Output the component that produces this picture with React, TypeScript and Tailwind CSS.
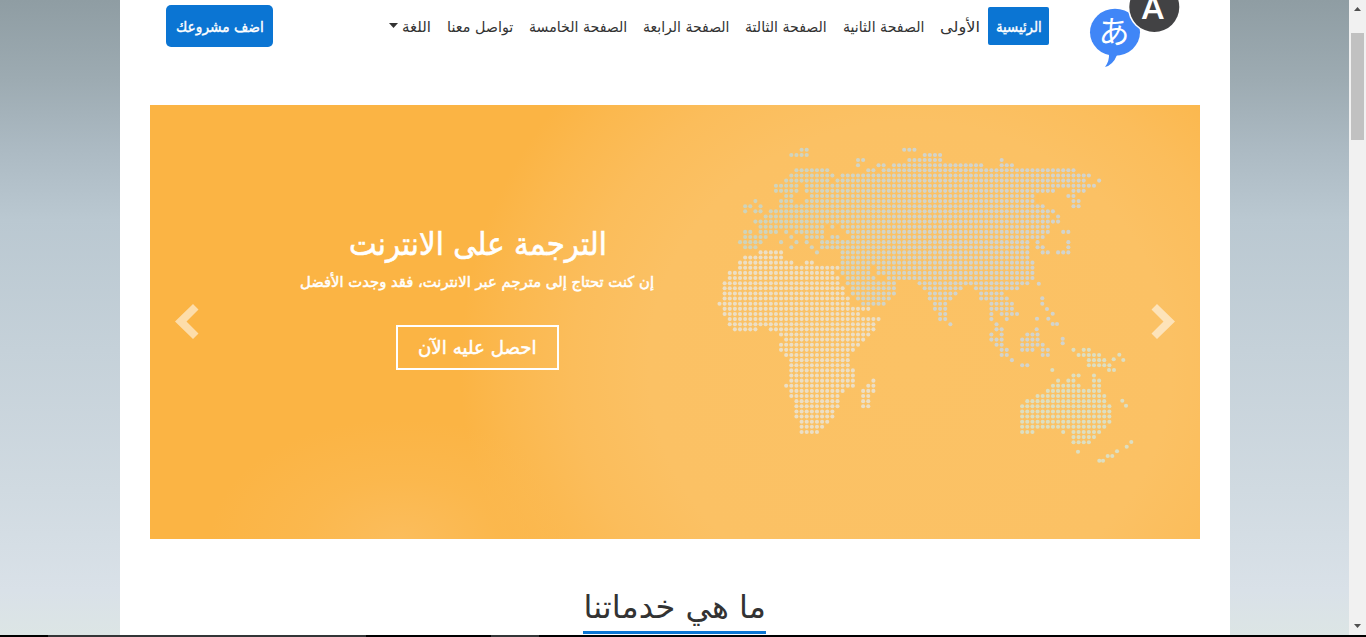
import { useLayoutEffect, useRef, useState, type ReactNode } from 'react';
import clsx from 'clsx';

/** A line of text that is narrowed or widened to a given width. */
function FitText({ width, className, children }: { width: number; className?: string; children: ReactNode }) {
  const ref = useRef<HTMLSpanElement>(null);
  const [scale, setScale] = useState(1);
  useLayoutEffect(() => {
    if (ref.current) setScale(width / ref.current.offsetWidth);
  }, [width]);
  return (
    <span className={clsx('flex justify-start whitespace-nowrap', className)} style={{ width }}>
      <span ref={ref} className="block shrink-0 origin-right" style={{ transform: `scaleX(${scale})` }}>
        {children}
      </span>
    </span>
  );
}

type Run = [number, number];
type Rows = Record<number, Run[]>;

const eurasia: Rows = {
  0: [[16, 17], [36, 38]],
  1: [[14, 17], [40, 43]],
  2: [[27, 28], [37, 43], [55, 55]],
  3: [[27, 27], [31, 32], [34, 51], [55, 57]],
  4: [[15, 21], [29, 30], [32, 69]],
  5: [[14, 22], [24, 72]],
  6: [[13, 21], [23, 71], [74, 74]],
  7: [[11, 15], [17, 73]],
  8: [[11, 15], [17, 65], [69, 71]],
  9: [[13, 14], [18, 61], [68, 69]],
  10: [[7, 7], [12, 14], [17, 61], [69, 70]],
  11: [[5, 6], [8, 8], [12, 63], [69, 70]],
  12: [[5, 5], [7, 8], [10, 65]],
  13: [[9, 64], [66, 66]],
  14: [[7, 66]],
  15: [[8, 20], [22, 22], [24, 64]],
  16: [[5, 6], [8, 11], [13, 13], [15, 20], [25, 64], [67, 68]],
  17: [[5, 9], [14, 14], [17, 20], [22, 23], [26, 63]],
  18: [[4, 8], [12, 12], [15, 15], [17, 17], [20, 60], [62, 62], [68, 68]],
  19: [[5, 7], [14, 14], [18, 18], [20, 60], [62, 63], [68, 68]],
  20: [[19, 19], [24, 60], [63, 64], [66, 68]],
  21: [[24, 60]],
  22: [[24, 61]],
  23: [[24, 29], [31, 61]],
  24: [[24, 29], [31, 61]],
  25: [[25, 30], [33, 61]],
  26: [[25, 34], [39, 60]],
  27: [[26, 34], [40, 47], [50, 58]],
  28: [[26, 34], [41, 46], [51, 55]],
  29: [[27, 33], [41, 45], [51, 56]],
  30: [[28, 32], [42, 44], [53, 57]],
  31: [[42, 44], [53, 57]],
  32: [[43, 44], [53, 53], [55, 58]],
  33: [[43, 44], [53, 53], [56, 56]],
  34: [[45, 45], [54, 54]],
  35: [[54, 55]],
  36: [[53, 53], [55, 55], [60, 62]],
  37: [[53, 55], [59, 62]],
  38: [[54, 55], [59, 63]],
  39: [[55, 56], [59, 61], [63, 64]],
  40: [[55, 56], [63, 64]],
  41: [[57, 57]],
  42: [[59, 60]],
};

const africa: Rows = {
  20: [[8, 12]],
  21: [[5, 12]],
  22: [[4, 14], [17, 18]],
  23: [[4, 23]],
  24: [[2, 22]],
  25: [[2, 23]],
  26: [[1, 23]],
  27: [[1, 24]],
  28: [[1, 24]],
  29: [[1, 25]],
  30: [[0, 25]],
  31: [[1, 29]],
  32: [[1, 27]],
  33: [[2, 31]],
  34: [[2, 30]],
  35: [[3, 7], [10, 30]],
  36: [[12, 29]],
  37: [[13, 28]],
  38: [[12, 27]],
  39: [[12, 26]],
  40: [[13, 25]],
  41: [[14, 25]],
  42: [[14, 25]],
  43: [[14, 26]],
  44: [[14, 26]],
  45: [[14, 26], [30, 30]],
  46: [[13, 26], [29, 30]],
  47: [[14, 24], [28, 30]],
  48: [[14, 23], [28, 29]],
  49: [[15, 23], [28, 29]],
  50: [[15, 23], [28, 29]],
  51: [[15, 22]],
  52: [[15, 22]],
  53: [[16, 21]],
  54: [[16, 20]],
  55: [[16, 19]],
};

const oceania: Rows = {
  39: [[69, 69], [71, 72]],
  40: [[70, 74]],
  41: [[72, 75]],
  42: [[72, 76]],
  44: [[69, 70], [73, 73]],
  45: [[66, 66], [68, 69], [73, 74]],
  46: [[65, 70], [73, 74]],
  47: [[64, 74]],
  48: [[62, 75]],
  49: [[60, 75]],
  50: [[59, 76]],
  51: [[59, 76]],
  52: [[59, 76]],
  53: [[59, 76]],
  54: [[59, 75]],
  55: [[59, 61], [67, 67], [69, 74]],
  56: [[69, 73]],
  57: [[69, 72]],
};

const asianIslands = [
  [321.8, 136.7], [325.3, 151.3], [325.3, 156.7], [330, 162], [335.7, 166.7], [320, 171.7], [331.3, 171.7],
  [335.7, 177], [340, 177], [319.7, 182.3], [345.7, 191.7], [345.7, 196.3],
];

const southernIslands = [
  [402.3, 207.7], [396.7, 212.3], [406.3, 213], [392, 223], [397, 223], [335.3, 223], [405.3, 253.7],
  [409, 258.7], [414.3, 295], [409.7, 299.7], [400, 304.3], [390.7, 309], [395.3, 309], [382.3, 313.7],
  [386, 313.7], [361, 304.7],
];

function Dots({ rows, islands = [] }: { rows: Rows; islands?: number[][] }) {
  const points = [...islands];
  for (const [row, runs] of Object.entries(rows))
    for (const [from, to] of runs)
      for (let c = from; c <= to; c++) points.push([2.5 + c * 5.13, 2.8 + Number(row) * 5.13]);
  return (
    <>
      {points.map(([x, y], i) => (
        <circle key={i} cx={x} cy={y} r={2.05} />
      ))}
    </>
  );
}

function WorldMap() {
  return (
    <svg width="420" height="322" viewBox="0 0 420 322" className="block shrink-0">
      <defs>
        <linearGradient id="eurasia" gradientUnits="userSpaceOnUse" x1="0" y1="0" x2="240" y2="0">
          <stop offset="0" stopColor="#cdd3b8" />
          <stop offset="0.5" stopColor="#d1d5c5" />
          <stop offset="1" stopColor="#d2d4ce" />
        </linearGradient>
      </defs>
      <g fill="url(#eurasia)">
        <Dots rows={eurasia} islands={asianIslands} />
      </g>
      <g fill="#ecdfc6">
        <Dots rows={africa} />
      </g>
      <g fill="#dddfc2">
        <Dots rows={oceania} islands={southernIslands} />
      </g>
    </svg>
  );
}

function Logo() {
  return (
    <svg width="92" height="68" viewBox="1088 0 92 68" className="block">
      <path d="M1109 54 Q1109.500 61 1105 67 Q1113 65 1117 55Z" fill="#4086f7" />
      <ellipse cx="1115" cy="32.300" rx="25" ry="23.500" fill="#4086f7" />
      <text
        x="1114"
        y="43"
        textAnchor="middle"
        fill="#fff"
        className="font-['Noto_Sans_CJK_JP',sans-serif] text-[31px]"
      >
        あ
      </text>
      <circle cx="1154.300" cy="7" r="26.500" fill="#fff" />
      <circle cx="1154.300" cy="7" r="25" fill="#424244" />
      <text x="1152.700" y="19.300" textAnchor="middle" fill="#fff" className="font-['Roboto',sans-serif] text-[34px] font-medium">
        A
      </text>
    </svg>
  );
}

const navItems = [
  { label: 'الأولى', width: 40 },
  { label: 'الصفحة الثانية', width: 81 },
  { label: 'الصفحة الثالتة', width: 82 },
  { label: 'الصفحة الرابعة', width: 86 },
  { label: 'الصفحة الخامسة', width: 98 },
  { label: 'تواصل معنا', width: 66 },
];

function Header() {
  return (
    <header className="flex h-[105px] items-start pr-[50px] pl-[46px]">
      <Logo />
      <nav className="mt-[7px] mr-[39px] flex h-[38px] items-center text-[15px] text-[#333]">
        <a className="flex h-full items-center rounded-[2px] bg-[#0b75d3] px-[7.500px] pt-0.5 text-white [-webkit-text-stroke:0.4px_white]">
          <FitText width={46}>الرئيسية</FitText>
        </a>
        {navItems.map((item) => (
          <a key={item.label} className="px-2 pt-0.5">
            <FitText width={item.width}>{item.label}</FitText>
          </a>
        ))}
        <a className="flex items-center gap-1 pt-0.5 pr-2">
          <FitText width={29}>اللغة</FitText>
          <svg width="9" height="5" viewBox="0 0 9 5" className="mb-1">
            <path d="M0 0H9L4.500 5Z" fill="#333" />
          </svg>
        </a>
      </nav>
      <button className="mt-[5px] mr-auto flex h-[42px] w-[107px] items-center justify-center rounded-[5px] bg-[#0b75d3] pt-0.5 text-[15px] text-white [-webkit-text-stroke:0.4px_white]">
        <FitText width={88}>اضف مشروعك</FitText>
      </button>
    </header>
  );
}

function Chevron({ left }: { left?: boolean }) {
  return (
    <svg width="24" height="36" viewBox="0 0 24 36" className={clsx('shrink-0', left && '-scale-x-100')}>
      <path d="M6 0 24 17.500 6 35 .500 29.500 12.500 17.500 .500 5.500Z" fill="#fff" fillOpacity="0.550" />
    </svg>
  );
}

function Hero() {
  return (
    <section className="mx-[30px] flex h-[434px] items-start bg-[#fbb444] bg-[radial-gradient(ellipse_190px_120px_at_250px_434px,#fbbd5c_0%,#fbba5399_50%,#fbb44400_100%),radial-gradient(ellipse_450px_420px_at_760px_260px,#fbc265_0%,#fbc164_58%,#fbbd5b_75%,#fbb84e_90%,#fbb444_100%)] pr-[25px] pl-[25px]">
      <div className="mt-[199px]"><Chevron /></div>
      <div className="mt-[42px] flex w-[434px] justify-end">
        <WorldMap />
      </div>
      <div className="mr-[61px] flex w-[357px] shrink-0 flex-col items-center pt-[117px] text-white">
        <h1 className="text-[32px] leading-[44px] [-webkit-text-stroke:0.6px_white]">
          <FitText width={258}>الترجمة على الانترنت</FitText>
        </h1>
        <p className="pt-px text-[15px] leading-[30px] [-webkit-text-stroke:0.5px_white]">
          <FitText width={354}>إن كنت تحتاج إلى مترجم عبر الانترنت، فقد وجدت الأفضل</FitText>
        </p>
        <button className="mt-[28px] flex h-[45px] w-[163px] items-center justify-center border-2 border-white text-[19px] [-webkit-text-stroke:0.5px_white]">
          <FitText width={119}>احصل عليه الآن</FitText>
        </button>
      </div>
      <div className="mt-[199px] mr-auto"><Chevron left /></div>
    </section>
  );
}

function Scrollbar() {
  return (
    <div className="flex w-[17px] shrink-0 flex-col items-center justify-between bg-[#f1f1f1] pt-[7px] pb-[7px]">
      <svg width="7" height="4" viewBox="0 0 7 4"><path d="M0 4 3.500 0 7 4Z" fill="#505050" /></svg>
      <div className="mt-[22px] mb-auto h-[107px] w-[13px] bg-[#c1c1c1]" />
      <svg width="7" height="4" viewBox="0 0 7 4"><path d="M0 0H7L3.500 4Z" fill="#505050" /></svg>
    </div>
  );
}

export default function App() {
  return (
    <div className="flex h-[637px] w-[1366px] flex-col overflow-hidden font-['DejaVu_Sans','Noto_Sans',sans-serif]">
      <div className="flex h-[635px]">
        <div className="flex flex-1 justify-center bg-[linear-gradient(to_bottom,#8f9da3_0px,#9dabb2_80px,#acbac3_150px,#bac8d1_220px,#c5d1d9_350px,#d0dae1_490px,#d9e1e8_590px,#dce5e5_635px)] pl-px">
          <main dir="rtl" className="h-[635px] w-[1110px] overflow-hidden bg-white">
            <Header />
            <Hero />
            <section className="flex justify-center pt-[43px] pr-px">
              <h2 className="h-[52px] border-b-3 border-[#0b75d3] text-[32px] leading-[50px] text-[#333]">
                <FitText width={183}>ما هي خدماتنا</FitText>
              </h2>
            </section>
          </main>
        </div>
        <Scrollbar />
      </div>
      <div className="flex h-0.5 bg-black">
        <div className="ml-12 w-[318px] bg-[#333537]" />
        <div className="ml-[125px] w-12 bg-[#333537]" />
      </div>
    </div>
  );
}
